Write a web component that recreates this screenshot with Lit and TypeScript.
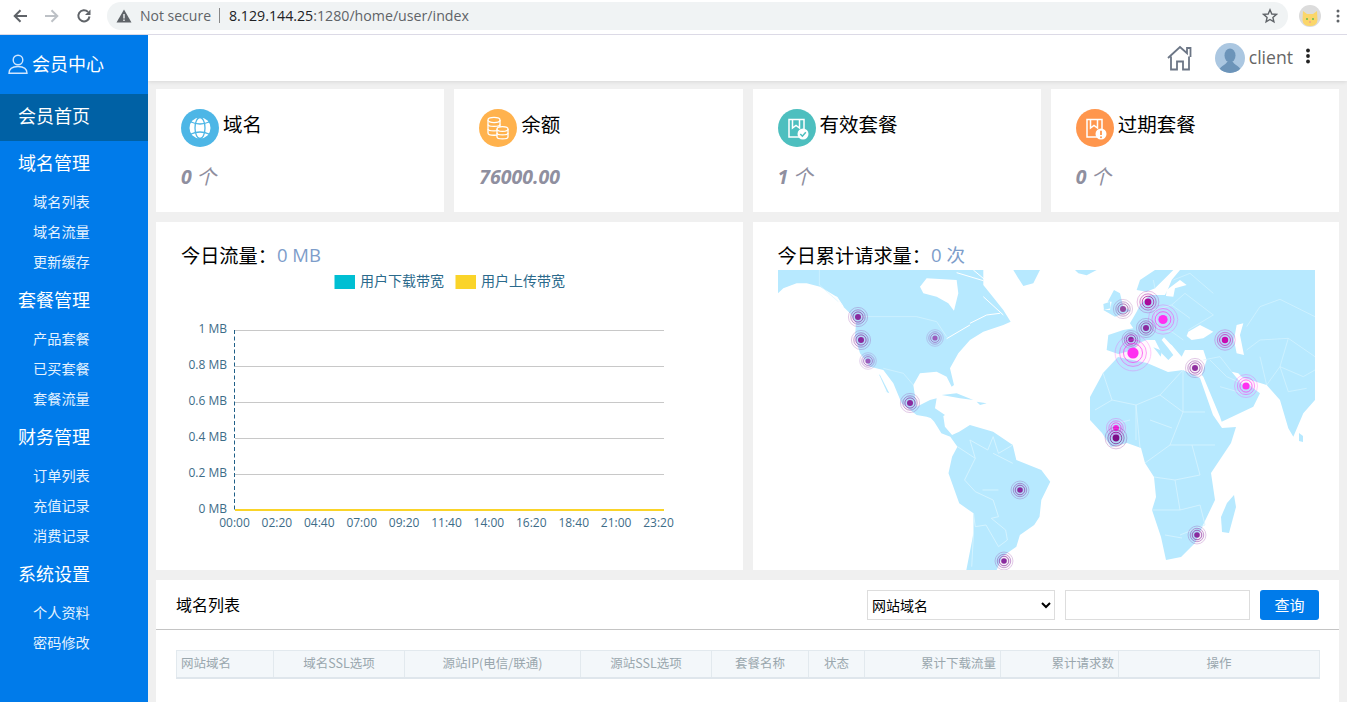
import { LitElement, html, css, svg } from "lit";
import { customElement } from "lit/decorators.js";

const nav = [
  { title: "域名管理", items: ["域名列表", "域名流量", "更新缓存"] },
  { title: "套餐管理", items: ["产品套餐", "已买套餐", "套餐流量"] },
  { title: "财务管理", items: ["订单列表", "充值记录", "消费记录"] },
  { title: "系统设置", items: ["个人资料", "密码修改"] },
];

const yLabels = ["1 MB", "0.8 MB", "0.6 MB", "0.4 MB", "0.2 MB", "0 MB"];
const xLabels = ["00:00", "02:20", "04:40", "07:00", "09:20", "11:40", "14:00", "16:20", "18:40", "21:00", "23:20"];

const cols = [
  { t: "网站域名", w: 97, a: "left" },
  { t: "域名SSL选项", w: 131, a: "center" },
  { t: "源站IP(电信/联通)", w: 176, a: "center" },
  { t: "源站SSL选项", w: 131, a: "center" },
  { t: "套餐名称", w: 97, a: "center" },
  { t: "状态", w: 56, a: "center" },
  { t: "累计下载流量", w: 136, a: "right" },
  { t: "累计请求数", w: 118, a: "right" },
  { t: "操作", w: 201, a: "center" },
];

// x, y, centre radius, colour
const points: [number, number, number, string][] = [
  [858, 317, 3, "#8a2a9e"],
  [861, 340, 3, "#8a2a9e"],
  [868, 361, 2.6, "#9a5cbc"],
  [935, 338, 2.6, "#9a5cbc"],
  [910, 403, 3, "#8a2a9e"],
  [1123, 309, 3, "#93479f"],
  [1148, 302, 3.4, "#a80a9a"],
  [1163, 319.5, 4.6, "#ff2ff0"],
  [1146, 328, 3, "#8a2a9e"],
  [1131, 339.5, 2.8, "#8a2a9e"],
  [1133, 353, 5.6, "#ff2ff0"],
  [1225, 340, 3.2, "#c80ab0"],
  [1195, 368, 3, "#8f2f9f"],
  [1246, 386, 3.6, "#ff2ff0"],
  [1116, 428, 3, "#f52ae0"],
  [1116, 438, 3.4, "#7c0f86"],
  [1020, 490, 2.8, "#8a2a9e"],
  [1197, 535, 2.8, "#8a2a9e"],
  [1004, 561, 2.8, "#8a2a9e"],
];

const LAND = "#b7e9ff";
const LINE = "#d8f4ff";

const pt = (s: string) => s.trim().replace(/\s+/g, " ");

const worldMap = svg`
  <svg class="map" viewBox="778 270 537 300" width="537" height="300">
    <g transform="translate(770 260) scale(.3333)">
      <polygon fill="${LAND}" points="${pt(`
        24,30 24,100 40,85 80,70 110,70 150,80 200,110 220,140 240,160 258,190 255,230 270,280 300,320 340,330 370,370
        395,430 440,465 470,470 500,480 525,465 495,445 500,415 480,420 440,440 430,375 450,340 500,335 530,350 545,380 552,375
        540,325 565,280 600,240 640,215 700,195 722,185 700,150 660,100 640,75 640,30`)}"></polygon>
      <polygon fill="#fff" points="450,80 470,55 560,60 565,100 552,152 535,130 500,110 460,100"></polygon>
      <polygon fill="${LAND}" points="730,30 810,30 790,70 760,78 745,55"></polygon>
      <polygon fill="${LAND}" points="515,405 560,400 610,420 570,415"></polygon>
      <polygon fill="${LAND}" points="620,425 650,430 630,435"></polygon>
      <polygon fill="${LAND}" points="320,340 330,345 358,400 348,395"></polygon>
      <polygon fill="#fff" points="310,322 322,332 352,398 342,390"></polygon>
      <path fill="none" stroke="#fff" stroke-width="3" d="M560 38 L640 62 M610 30 L660 72 M640 110 L700 165 M600 190 L650 165 L690 160 M530 236 L600 195 M200 110 L220 140"></path>
      <path fill="none" stroke="${LINE}" stroke-width="2" d="M148 30 V75 L205 125 M262 170 H440 L500 185 L530 230 M340 325 L400 340 L430 375"></path>
    </g>

    <g transform="translate(770 410) scale(.357 .3333)">
      <polygon fill="${LAND}" points="430,0 460,15 485,15 490,50 510,75 530,65 560,45 625,65 680,105 690,150 760,180 785,215 760,270 755,320 740,345 700,375 690,410 650,440 635,480 550,480 570,370 570,310 530,280 500,190 510,140 525,110 505,80 480,70 460,35"></polygon>
      <path fill="none" stroke="${LINE}" stroke-width="2.5" d="M525 110 L575 145 L545 210 L575 245 L625 270 L640 320 L620 325 L660 360 L665 390 L640 410 L605 345 L575 350 L570 310 M575 145 L560 90 L610 120 L625 80 L640 130 L680 105 M680 160 L625 130 M595 240 L640 240 M570 370 L565 470"></path>
    </g>

    <g transform="translate(1040 260) scale(.3333)">
      <polygon fill="${LAND}" points="${pt(`
        345,30 300,60 290,90 320,95 345,85 370,60 385,45 400,30 420,30 395,60 385,85 375,105 345,105 330,105 300,135 290,155
        270,190 280,205 250,210 205,225 200,270 235,282 280,270 295,250 320,240 345,240 365,280 385,300 400,285 385,265 365,240
        395,255 425,290 435,270 490,270 500,300 485,345 490,350 540,470 545,485 640,440 660,400 640,385 610,360 575,335 600,350
        680,375 720,420 745,505 760,530 790,460 825,420 825,30`)}"></polygon>
      <polygon fill="${LAND}" points="190,150 222,90 240,100 250,140 272,152 225,170"></polygon>
      <polygon fill="#fff" points="195,125 215,125 210,150 190,150"></polygon>
      <polygon fill="${LAND}" points="190,132 210,125 212,145 192,150"></polygon>
      <polygon fill="${LAND}" points="105,30 170,30 140,46 115,40"></polygon>
      <polygon fill="#fff" points="445,215 480,195 520,215 490,235 455,240 440,228"></polygon>
      <polygon fill="#fff" points="590,195 610,190 600,225 612,285 590,280 582,240"></polygon>
      <polygon fill="#fff" points="365,240 372,232 400,262 392,262"></polygon>
      <polygon fill="#fff" points="380,90 420,60 440,75 405,85 400,110 378,108"></polygon>
      <polygon fill="#fff" points="575,335 595,340 625,372 610,378"></polygon>
      <polygon fill="${LAND}" points="340,262 366,272 362,290 352,276"></polygon>
      <path fill="none" stroke="${LINE}" stroke-width="2" d="M300 135 L345 150 L395 135 L435 100 L520 165 L445 210 M345 150 L355 210 L395 215 L430 240 M395 135 L450 175 M620 200 L660 140 L720 118 L825 170 M620 270 L660 240 L745 235 L825 290 M745 235 L720 320 L790 350 L825 330 M660 290 L680 375 M720 320 L680 375 M720 320 L745 395 L800 385 M490 300 L540 290 L575 335 M510 300 L560 350 L640 385 M540 380 L610 400 M340 60 L345 85 M400 60 L450 40 L520 100"></path>
    </g>

    <polygon fill="${LAND}" points="${pt(`
      1090,420 1090,397 1103,373 1118,357 1147,363 1168,372 1183,370 1200,378 1213,415 1222,428 1236,427 1231,443
      1211,473 1215,500 1204,523 1195,543 1181,557 1166,560 1161,537 1152,510 1156,497 1154,477 1145,463 1141,448
      1127,443 1111,447 1102,433`)}"></polygon>
    <polygon fill="${LAND}" points="1234,495 1236,507 1229,533 1222,532 1221,517 1227,503"></polygon>
    <polygon fill="${LAND}" points="1299,433 1303,436 1303,442 1299,441"></polygon>
    <path fill="none" stroke="${LINE}" stroke-width=".8" d="M1103 373 L1112 400 L1136 405 L1160 395 L1183 370 M1136 405 L1136 440 M1160 395 L1183 412 L1183 370 M1183 412 L1205 412 M1112 400 L1095 410 M1136 405 L1140 448 M1183 412 L1170 445 L1145 463 M1170 445 L1192 445 L1200 475 L1175 480 L1154 477 M1192 445 L1215 445 M1175 480 L1180 510 L1152 510 M1180 510 L1200 505 L1205 525 L1180 535 M1165 535 L1182 538 M1150 420 L1172 428 M1110 425 L1130 420"></path>

    ${points.map(([x, y, r, c]) => svg`
      <g fill="none" stroke="${c}">
        <circle cx="${x}" cy="${y}" r="${r * 3.2}" fill="${c}" fill-opacity=".07" stroke-width=".9" opacity=".28"></circle>
        <circle cx="${x}" cy="${y}" r="${r * 2.4}" fill="${c}" fill-opacity=".1" stroke-width=".9" opacity=".5"></circle>
        <circle cx="${x}" cy="${y}" r="${r * 1.7}" stroke-width=".9" opacity=".75"></circle>
        <circle cx="${x}" cy="${y}" r="${r}" fill="${c}" stroke="none"></circle>
      </g>`)}
  </svg>`;

const lineChart = svg`
  <svg class="chart" viewBox="181 270 537 300" width="537" height="300">
    <rect x="334.5" y="275" width="20.5" height="14" fill="#00bfd3"></rect>
    <text class="lg" x="360" y="286">用户下载带宽</text>
    <rect x="455.5" y="275" width="20.5" height="14" fill="#fad429"></rect>
    <text class="lg" x="481" y="286">用户上传带宽</text>
    ${yLabels.map((l, i) => svg`
      <line x1="235" x2="664" y1="${330.5 + i * 36}" y2="${330.5 + i * 36}" stroke="#c8c8c8"></line>
      <text class="ax" x="227" y="${333 + i * 36}" text-anchor="end">${l}</text>`)}
    <line x1="234.5" x2="234.5" y1="330" y2="510" stroke="#1f5f87" stroke-dasharray="4 2.5"></line>
    <line x1="235" x2="664" y1="510" y2="510" stroke="#fad429" stroke-width="2"></line>
    ${xLabels.map((l, i) => svg`<text class="ax" x="${234.5 + i * 42.4}" y="527" text-anchor="middle">${l}</text>`)}
  </svg>`;

const bookIcon = (badge: unknown) => svg`
  <g fill="none" stroke="#fff" stroke-width="1.5">
    <path d="M26 24 V10.5 H11 V28 H21"></path>
    <path d="M14.5 10.5 V19 L18 16.5 L21.5 19 V10.5"></path>
  </g>
  ${badge}`;

const icons = {
  globe: svg`
    <svg class="ic" viewBox="0 0 38 38"><circle cx="19" cy="19" r="19" fill="#4db6e6"></circle>
      <circle cx="19" cy="19" r="10.5" fill="#fff"></circle>
      <g fill="none" stroke="#4db6e6" stroke-width="1.3">
        <ellipse cx="19" cy="19" rx="5" ry="10.5"></ellipse>
        <path d="M10 13 Q19 17 28 13 M10 25 Q19 21 28 25"></path>
      </g>
    </svg>`,
  coins: svg`
    <svg class="ic" viewBox="0 0 38 38"><circle cx="19" cy="19" r="19" fill="#ffb24d"></circle>
      <g fill="#ffb24d" stroke="#fff" stroke-width="1.3">
        <path d="M9 11 V24 C9 27 21 27 21 24 V11"></path>
        <ellipse cx="15" cy="11" rx="6" ry="2.6"></ellipse>
        <path d="M9 15.5 C9 18 21 18 21 15.5 M9 20 C9 22.5 21 22.5 21 20" fill="none"></path>
        <path d="M18 20 V28 C18 30.5 29 30.5 29 28 V20"></path>
        <ellipse cx="23.5" cy="20" rx="5.5" ry="2.4"></ellipse>
        <path d="M18 24 C18 26.5 29 26.5 29 24" fill="none"></path>
      </g>
    </svg>`,
  ok: svg`
    <svg class="ic" viewBox="0 0 38 38"><circle cx="19" cy="19" r="19" fill="#4dbfbf"></circle>
      ${bookIcon(svg`<circle cx="25" cy="25" r="5.5" fill="#fff"></circle>
        <path d="M22.3 25 L24.4 27.2 L27.8 23.2" fill="none" stroke="#4dbfbf" stroke-width="1.5"></path>`)}
    </svg>`,
  warn: svg`
    <svg class="ic" viewBox="0 0 38 38"><circle cx="19" cy="19" r="19" fill="#ff964d"></circle>
      ${bookIcon(svg`<circle cx="25" cy="25" r="5.5" fill="#fff"></circle>
        <path d="M25 21.8 V26" stroke="#ff964d" stroke-width="1.8"></path><circle cx="25" cy="28.2" r="1" fill="#ff964d"></circle>`)}
    </svg>`,
};

const stats = [
  { icon: icons.globe, title: "域名", num: "0", unit: " 个" },
  { icon: icons.coins, title: "余额", num: "76000.00", unit: "" },
  { icon: icons.ok, title: "有效套餐", num: "1", unit: " 个" },
  { icon: icons.warn, title: "过期套餐", num: "0", unit: " 个" },
];

@customElement("app-root")
export class AppRoot extends LitElement {
  static styles = css`
    :host { display: block; width: 1347px; height: 702px; overflow: hidden; background: #f0f0f0; font-family: "Noto Sans CJK SC", "Open Sans", sans-serif; }
    * { box-sizing: border-box; }

    .browser { height: 35px; background: #fff; border-bottom: 1px solid #dcdae6; display: flex; align-items: center; padding-bottom: 3px; }
    .nav-btn { width: 32px; height: 24px; display: flex; align-items: center; justify-content: center; flex: none; }
    .nav-btns { display: flex; margin-left: 4px; margin-right: 7px; }
    .omni { width: 1181px; height: 28px; border-radius: 14px; background: #f0f3f4; display: flex; align-items: center; padding-left: 9px; font: 14px "Open Sans", sans-serif; flex: none; }
    .omni .ns { color: #5f6368; margin-left: 8px; font-size: 14px; }
    .omni .sep { width: 1px; height: 15px; background: #888; margin: 0 9px 0 8px; }
    .omni .host { color: #202124; font-size: 14.2px; }
    .omni .path { color: #5f6368; font-size: 14.2px; }
    .omni .star { margin-left: auto; margin-right: 10px; display: flex; }
    .prof { margin-left: 11px; display: flex; }
    .cdots { margin-left: 15px; display: flex; }

    .app { display: flex; height: 667px; }
    .side { width: 148px; flex: none; background: #007bea; color: #fff; }
    .brand { height: 59px; display: flex; align-items: center; padding: 0 0 4px 8px; font-size: 18px; gap: 4px; }
    .brand svg { margin-top: 2px; }
    .active { height: 47px; line-height: 43px; padding-left: 18px; font-size: 18px; background: #0061a5; }
    .gtitle { height: 46px; line-height: 43px; padding-left: 18px; font-size: 18px; }
    .sub { height: 30px; line-height: 28px; padding-left: 33px; font-size: 14.2px; color: #e4f2ff; }
    .group { padding-bottom: 1px; }

    .main { flex: 1; min-width: 0; display: flex; flex-direction: column; overflow: hidden; }
    .top { height: 46px; flex: none; background: #fff; box-shadow: 0 1px 4px rgba(0,0,0,.1); display: flex; align-items: center; justify-content: flex-end; }
    .top .home { display: flex; margin-right: 22px; }
    .top .ava { display: flex; }
    .top .name { font: 17.6px "Open Sans", sans-serif; color: #666; margin-left: 4px; margin-right: 12px; line-height: 24px; margin-top: -2px; }
    .top .more { display: flex; margin-right: 36px; margin-top: -4px; }

    .content { padding: 8px; display: grid; grid-template-columns: minmax(0, 1fr); gap: 10px; }
    .stats { display: grid; grid-template-columns: repeat(4, minmax(0, 1fr)); gap: 10px; }
    .stat { background: #fff; height: 123px; padding: 20px 25px 0; }
    .stat-h { display: flex; align-items: center; gap: 4px; height: 38px; }
    .ic { width: 38px; height: 38px; display: block; flex: none; }
    .stat-t { font-size: 19.5px; color: #000; line-height: 32px; margin-top: -8px; }
    .stat-v { margin-top: 15px; height: 28px; font: italic 700 19.5px/28px "Open Sans", sans-serif; color: #8f8f9f; }
    .stat-v .u { font: italic 400 20px/28px "Noto Sans CJK SC", sans-serif; }

    .panels { display: grid; grid-template-columns: repeat(2, minmax(0, 1fr)); gap: 10px; }
    .panel { background: #fff; height: 348px; padding: 20px 25px 0; }
    .ptitle { height: 28px; line-height: 26px; font-size: 19.2px; color: #000; display: flex; }
    .ptitle .val { color: #7d9dca; font-family: "Open Sans", "Noto Sans CJK SC", sans-serif; font-size: 18.5px; }
    .map, .chart { display: block; }
    .lg { font: 14px "Noto Sans CJK SC", sans-serif; fill: #2b6a8c; }
    .ax { font: 12px "Open Sans", sans-serif; fill: #3d6c88; }

    .table-card { background: #fff; height: 200px; }
    .thead { height: 50px; border-bottom: 1px solid #c4c4c4; display: flex; align-items: center; padding: 0 20px; gap: 10px; }
    .thead .t { font-size: 16px; color: #000; margin-right: auto; line-height: 26px; margin-top: -2px; }
    select, input { height: 30px; border: 1px solid #ddd; background: #fff; font: 14px "Noto Sans CJK SC", sans-serif; color: #000; border-radius: 0; outline: none; }
    select { width: 188px; }
    input { width: 185px; }
    button { width: 59px; height: 30px; border: 0; border-radius: 3px; background: #007bea; color: #fff; font: 15px "Noto Sans CJK SC", sans-serif; padding: 0; }
    .tw { padding: 20px 20px 0; overflow: hidden; }
    table { border-collapse: collapse; table-layout: fixed; width: 1143px; }
    th { height: 27px; background: #f3f7fa; border: 1px solid #e2e9ee; border-bottom: 2px solid #dfe6ec; font-weight: 400; font-size: 12.5px; line-height: 24px; color: #9aa7ae; padding: 0 4px 2px; white-space: nowrap; overflow: hidden; }
    .l { text-align: left; } .c { text-align: center; } .r { text-align: right; }
  `;

  render() {
    return html`
      <div class="browser">
        <div class="nav-btns">
          <div class="nav-btn"><svg width="16" height="16" viewBox="0 0 16 16"><path d="M15 8H3M8.5 2.2 2.7 8l5.8 5.8" fill="none" stroke="#5f6368" stroke-width="2"></path></svg></div>
          <div class="nav-btn"><svg width="16" height="16" viewBox="0 0 16 16"><path d="M1 8h12M7.5 2.2 13.3 8l-5.8 5.8" fill="none" stroke="#bdc1c6" stroke-width="2"></path></svg></div>
          <div class="nav-btn"><svg width="16" height="16" viewBox="0 0 16 16"><path d="M13.5 8.5A5.6 5.6 0 1 1 12 3.9" fill="none" stroke="#5f6368" stroke-width="2"></path><path d="M14.5 1.5V7H9z" fill="#5f6368"></path></svg></div>
        </div>
        <div class="omni">
          <svg width="16" height="14" viewBox="0 0 16 14"><path d="M8 0.5 15.5 13.5H.5z" fill="#5f6368"></path><path d="M8 5V9.5M8 10.5V12" stroke="#f0f3f4" stroke-width="1.4"></path></svg>
          <span class="ns">Not secure</span><span class="sep"></span>
          <span class="host">8.129.144.25</span><span class="path">:1280/home/user/index</span>
          <span class="star"><svg width="16" height="16" viewBox="0 0 16 16"><path d="M8 1.8 9.8 6l4.6.4-3.5 3 1 4.5L8 11.5l-3.9 2.4 1-4.5-3.5-3L6.2 6z" fill="none" stroke="#5f6368" stroke-width="1.4"></path></svg></span>
        </div>
        <div class="prof"><svg width="22" height="22" viewBox="0 0 22 22"><circle cx="11" cy="11" r="11" fill="#dcdcdc"></circle><path d="M4 6 L8 9 H14 L18 6 L18.5 15 Q18 21 11 21 Q4 21 3.5 15z" fill="#fbd66a"></path><circle cx="8" cy="14" r="1" fill="#6b5"></circle><circle cx="14" cy="14" r="1" fill="#6b5"></circle><circle cx="11" cy="17" r="1" fill="#f3a38b"></circle></svg></div>
        <div class="cdots"><svg width="4" height="14" viewBox="0 0 4 14"><circle cx="2" cy="2" r="1.5" fill="#5f6368"></circle><circle cx="2" cy="7" r="1.5" fill="#5f6368"></circle><circle cx="2" cy="12" r="1.5" fill="#5f6368"></circle></svg></div>
      </div>

      <div class="app">
        <aside class="side">
          <div class="brand">
            <svg width="20" height="20" viewBox="0 0 20 20" fill="none" stroke="#cfe6ff" stroke-width="1.4"><circle cx="10" cy="6" r="4.8"></circle><path d="M1 19.3C1 14.5 5 12.5 10 12.5S19 14.5 19 19.3z"></path></svg>
            <span>会员中心</span>
          </div>
          <div class="active">会员首页</div>
          ${nav.map((g) => html`
            <div class="gtitle">${g.title}</div>
            <div class="group">${g.items.map((i) => html`<div class="sub">${i}</div>`)}</div>`)}
        </aside>

        <main class="main">
          <div class="top">
            <span class="home"><svg width="26" height="26" viewBox="0 0 26 26" fill="none" stroke="#6c7686" stroke-width="1.8"><path d="M1 13 13 2l7 6.2V3h3.500v9M4 11.500V24.500H10V16.500H16V24.500H22V11.500"></path></svg></span>
            <span class="ava"><svg width="30" height="30" viewBox="0 0 30 30"><defs><clipPath id="av"><circle cx="15" cy="15" r="15"></circle></clipPath></defs><circle cx="15" cy="15" r="15" fill="#abc7e1"></circle><g clip-path="url(#av)" fill="#6c94b9"><ellipse cx="15" cy="12.5" rx="5.5" ry="7"></ellipse><path d="M3 30C4 23 11 22 12 19H18C19 22 26 23 27 30z"></path></g></svg></span>
            <span class="name">client</span>
            <span class="more"><svg width="6" height="16" viewBox="0 0 6 16"><circle cx="3" cy="2.5" r="1.9" fill="#222"></circle><circle cx="3" cy="8" r="1.9" fill="#222"></circle><circle cx="3" cy="13.5" r="1.9" fill="#222"></circle></svg></span>
          </div>

          <div class="content">
            <section class="stats">
              ${stats.map((s) => html`
                <div class="stat">
                  <div class="stat-h">${s.icon}<span class="stat-t">${s.title}</span></div>
                  <div class="stat-v">${s.num}<span class="u">${s.unit}</span></div>
                </div>`)}
            </section>

            <section class="panels">
              <div class="panel">
                <div class="ptitle"><span>今日流量：</span><span class="val">0 MB</span></div>
                ${lineChart}
              </div>
              <div class="panel">
                <div class="ptitle"><span>今日累计请求量：</span><span class="val">0 次</span></div>
                ${worldMap}
              </div>
            </section>

            <section class="table-card">
              <div class="thead">
                <span class="t">域名列表</span>
                <select><option>网站域名</option></select>
                <input type="text" />
                <button>查询</button>
              </div>
              <div class="tw">
                <table>
                  <colgroup>${cols.map((c) => html`<col style="width:${c.w}px" />`)}</colgroup>
                  <thead><tr>${cols.map((c) => html`<th class="${c.a[0]}">${c.t}</th>`)}</tr></thead>
                </table>
              </div>
            </section>
          </div>
        </main>
      </div>
    `;
  }
}
